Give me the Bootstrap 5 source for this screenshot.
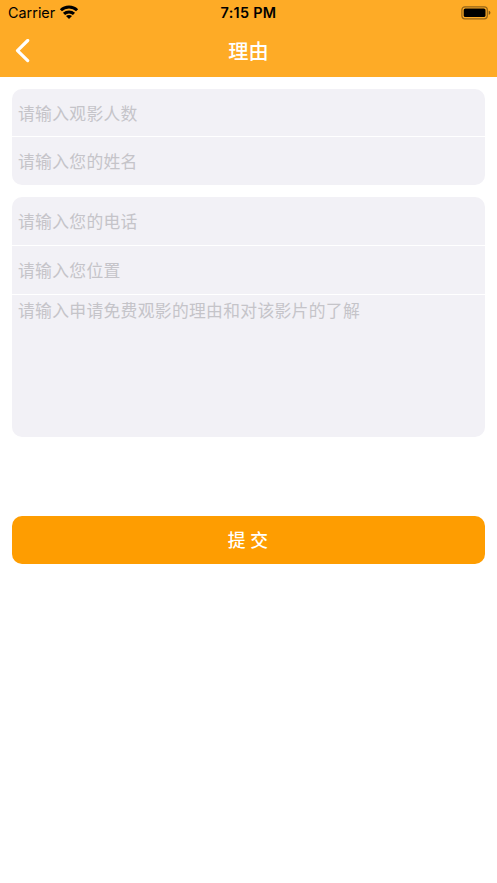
<!DOCTYPE html>
<html lang="zh-CN">
<head>
<meta charset="utf-8">
<meta name="viewport" content="width=device-width, initial-scale=1">
<title>理由</title>
<link href="https://cdn.jsdelivr.net/npm/bootstrap@5.3.0/dist/css/bootstrap.min.css" rel="stylesheet">
<style>
body { font-family: Inter, "Noto Sans CJK SC", sans-serif; color: #000; }
.app-top { background: #feab26; height: 77px; }
.status-line { height: 25px; padding: 0 6px 0 8px; font-size: 14.4px; line-height: 25px; }
.status-line > * { flex: 1 1 0; }
.clock { font-weight: 600; letter-spacing: .3px; padding-right: 2px; }
.title-line { height: 52px; }
.title-line > * { flex: 1 1 0; }
.page-title { font-size: 20.2px; font-weight: 500; line-height: 50px; color: #fff; padding-top: 2px; }
.back-btn svg { margin-left: 15px; margin-top: -2px; }
.form-page { padding: 12px 12px 0; }
.field-group { border-radius: 10px; background: #f2f1f6; overflow: hidden; }
.field-group .form-control {
  background: transparent; border: 0; border-radius: 0; box-shadow: none; resize: none;
  padding: 2px 6px 0; font-size: 16.8px; letter-spacing: .32px; line-height: 25px;
}
.field-group .form-control::placeholder { color: #c5c4c9; font-weight: 400; }
.field-group .field-divided { border-bottom: 1px solid #fff; }
.field-48 { height: 48px; }
.field-49 { height: 49px; }
.field-group .field-reason { height: 142px; padding-top: 4px; }
.submit-btn {
  --bs-btn-bg: #fe9d01; --bs-btn-color: #fff; --bs-btn-hover-bg: #ee9200; --bs-btn-hover-color: #fff;
  height: 48px; margin-top: 79px; border: 0; border-radius: 10px;
  font-size: 17.8px; font-weight: 500; line-height: 24px; padding: 2px 1px 0 0;
}
</style>
<script src="https://cdn.jsdelivr.net/npm/bootstrap@5.3.0/dist/js/bootstrap.bundle.min.js"></script>
</head>
<body class="bg-white">
<header class="app-top">
  <div class="status-line d-flex align-items-center">
    <div class="d-flex align-items-center">
      <span class="carrier">Carrier</span>
      <svg class="ms-1" width="20" height="15" viewBox="0 0 20 15" fill="none" stroke="#000" stroke-width="3" aria-hidden="true">
        <path d="M1.9 5.3C6.3 1 13.7 1 18.1 5.3"/>
        <path d="M5 8.9C7.8 6.2 12.2 6.2 15 8.9"/>
        <path d="M10 14 7 11.1C8.7 9.6 11.3 9.6 13 11.1Z" fill="#000" stroke="none"/>
      </svg>
    </div>
    <div class="clock text-center">7:15 PM</div>
    <div class="d-flex justify-content-end">
      <svg width="30" height="14" viewBox="0 0 30 14" aria-hidden="true">
        <rect x=".9" y=".8" width="25.4" height="12" rx="3" fill="none" stroke="#000" stroke-opacity=".42" stroke-width="1.2"/>
        <rect x="2.7" y="2.5" width="21.8" height="8.6" rx="1.6"/>
        <path d="M27.7 4.8C30 5.6 30 8 27.7 8.8Z" opacity=".5"/>
      </svg>
    </div>
  </div>
  <div class="title-line d-flex align-items-center">
    <a class="back-btn" href="#" aria-label="返回">
      <svg width="16" height="24" viewBox="0 0 16 24" fill="none" stroke="#fff" stroke-width="3.2" stroke-linecap="round" stroke-linejoin="round"><path d="M12.7 1.5 2.5 11.6 12.7 21.6"/></svg>
    </a>
    <h1 class="page-title text-center mb-0">理由</h1>
    <span></span>
  </div>
</header>
<main class="form-page">
  <form class="d-flex flex-column">
    <div class="field-group mb-2">
      <input class="form-control field-divided field-48" placeholder="请输入观影人数" aria-label="观影人数">
      <input class="form-control field-48" placeholder="请输入您的姓名" aria-label="姓名">
    </div>
    <div class="field-group mt-1">
      <input class="form-control field-divided field-49" placeholder="请输入您的电话" aria-label="电话">
      <input class="form-control field-divided field-49" placeholder="请输入您位置" aria-label="位置">
      <textarea class="form-control field-reason" placeholder="请输入申请免费观影的理由和对该影片的了解" aria-label="理由"></textarea>
    </div>
    <button type="button" class="btn submit-btn w-100">提 交</button>
  </form>
</main>
</body>
</html>
